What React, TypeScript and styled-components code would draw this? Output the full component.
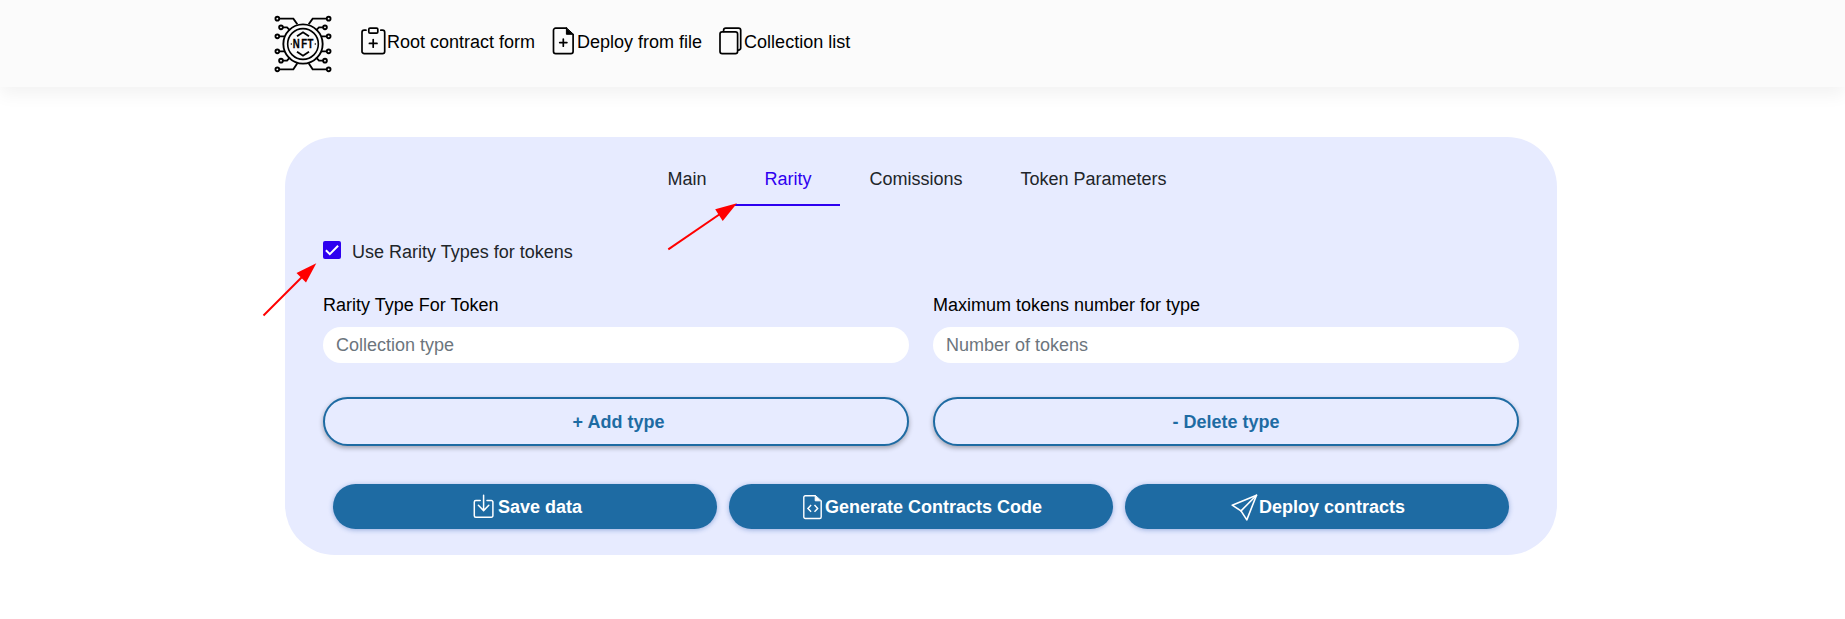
import React from "react";
import styled, { createGlobalStyle } from "styled-components";

const GlobalStyle = createGlobalStyle`
  *, *::before, *::after { box-sizing: border-box; }
  body {
    margin: 0;
    background: #fff;
    color: #212529;
    font: 18px/27px "Liberation Sans", Arial, sans-serif;
  }
`;

const Page = styled.div`
  position: relative;
  min-height: 619px;
  overflow: hidden;
`;

const Header = styled.header`
  display: flex;
  align-items: flex-start;
  height: 87px;
  padding: 15px 0 0 274px;
  background: #fbfbfb;
  box-shadow: 0 8px 16px rgba(0, 0, 0, 0.05);
`;

const Logo = styled.svg`
  display: block;
  width: 58px;
  height: 58px;
  flex: none;
`;

const Nav = styled.nav`
  display: flex;
  gap: 17px;
  margin: 12px 0 0 29px;
`;

const NavLink = styled.a`
  display: flex;
  align-items: flex-start;
  height: 28px;
  color: #000;
  white-space: nowrap;
  text-decoration: none;

  span {
    margin-top: 2px;
  }
`;

const Icon = styled.svg<{ $w: number; $h: number; $gap?: number }>`
  display: block;
  flex: none;
  width: ${(p) => p.$w}px;
  height: ${(p) => p.$h}px;
  margin-right: ${(p) => p.$gap ?? 0}px;
  fill: none;
  stroke: currentColor;
  stroke-linecap: round;
  stroke-linejoin: round;
`;

const Panel = styled.main`
  width: 1272px;
  height: 418px;
  margin: 50px 0 0 285px;
  padding: 16px 38px 0;
  border-radius: 50px;
  background: #e7ebff;
`;

const Tabs = styled.div`
  display: flex;
  justify-content: center;
  margin-right: 8px;
`;

const Tab = styled.button<{ $active?: boolean }>`
  padding: 13px 29px 11px;
  border: 0;
  border-bottom: 2px solid ${(p) => (p.$active ? "#2e00f0" : "transparent")};
  background: none;
  color: ${(p) => (p.$active ? "#2e00f0" : "#212529")};
  font: inherit;
`;

const CheckRow = styled.label`
  display: flex;
  align-items: flex-start;
  gap: 11px;
  margin-top: 33px;
  height: 27px;
`;

const CheckBox = styled.span`
  display: flex;
  width: 18px;
  height: 18px;
  margin-top: 2px;
  border-radius: 2px;
  background: #2e00f0;
`;

const Fields = styled.div`
  display: grid;
  grid-template-columns: 1fr 1fr;
  column-gap: 24px;
  margin-top: 26px;
`;

const Field = styled.label`
  display: flex;
  flex-direction: column;
  gap: 8px;
  color: #000;
`;

const Input = styled.input`
  width: 100%;
  height: 36px;
  padding: 0 13px;
  border: 0;
  border-radius: 18px;
  background: #fff;
  font: inherit;
  outline: none;

  &::placeholder {
    color: #6c757d;
    opacity: 1;
  }
`;

const OutlineButton = styled.button<{ $indent?: number }>`
  height: 49px;
  margin-top: 34px;
  padding: 2px 0 0 ${(p) => p.$indent ?? 0}px;
  border: 2px solid #1e6ba3;
  border-radius: 25px;
  background: #e7ebff;
  box-shadow: 0 2px 5px rgba(0, 0, 0, 0.32);
  color: #1e6ba3;
  font: inherit;
  font-weight: bold;
`;

const Actions = styled.div`
  display: grid;
  grid-template-columns: repeat(3, 1fr);
  gap: 12px;
  margin: 38px 10px 0;
`;

const ActionButton = styled.button`
  display: flex;
  align-items: center;
  justify-content: center;
  height: 45px;
  padding: 0;
  border: 0;
  border-radius: 23px;
  background: #1e6ba3;
  box-shadow: 0 1px 5px rgba(30, 80, 170, 0.4);
  color: #fff;
  font: inherit;
  font-weight: bold;

  span {
    padding-top: 2px;
  }
`;

const Annotations = styled.svg`
  position: absolute;
  top: 0;
  left: 0;
  width: 1845px;
  height: 619px;
  pointer-events: none;
`;

const CircuitHalf = () => (
  <>
    <circle cx="37" cy="41" r="5.6" />
    <circle cx="48" cy="67" r="5.6" />
    <circle cx="37" cy="94" r="5.6" />
    <circle cx="37" cy="139" r="5.6" />
    <circle cx="48" cy="167" r="5.6" />
    <circle cx="37" cy="193" r="5.6" />
    <path d="M43 41H85L97 58M53 67H66L75 76M43 94H58M43 139H58M53 167H66L75 157M43 193H85L97 175" />
  </>
);

const NftLogo = () => (
  <Logo viewBox="27 30 174 174" fill="none" stroke="#000" strokeWidth="5.6">
    <CircuitHalf />
    <g transform="matrix(-1 0 0 1 228 0)">
      <CircuitHalf />
    </g>
    <circle cx="114" cy="117" r="59" />
    <circle cx="114" cy="117" r="46" strokeWidth="4.8" />
    <path d="M96 94L114 82L132 94M96 140L114 152L132 140" />
    <g fill="#000" stroke="none">
      <circle cx="79" cy="117" r="2.3" />
      <circle cx="151" cy="117" r="2.3" />
      <text
        transform="scale(0.76 1)"
        x="110 143 168"
        y="130"
        fontFamily="Liberation Sans, Arial, sans-serif"
        fontWeight="bold"
        fontSize="38"
        stroke="#000"
        strokeWidth="1"
      >
        NFT
      </text>
    </g>
  </Logo>
);

const ClipboardPlus = () => (
  <Icon $w={25} $h={28} $gap={1} viewBox="0 0 25 28" strokeWidth="1.7">
    <path d="M5 3.2H3.2A2.2 2.2 0 0 0 1 5.4V24.4A2.2 2.2 0 0 0 3.2 26.6H21.5A2.2 2.2 0 0 0 23.7 24.4V5.4A2.2 2.2 0 0 0 21.5 3.2H19.8" />
    <rect x="7.8" y="1.1" width="9" height="5" rx="1.2" />
    <path d="M12.2 12.6V20.2M8.4 16.4H16" />
  </Icon>
);

const FilePlus = () => (
  <Icon $w={23} $h={28} $gap={2} viewBox="0 0 23 28" strokeWidth="1.7">
    <path d="M14.4 1.1H3.7A2.2 2.2 0 0 0 1.5 3.3V24.4A2.2 2.2 0 0 0 3.7 26.6H18.9A2.2 2.2 0 0 0 21.1 24.4V7.5" />
    <path d="M14.4 1.1V7.3H21.1Z" fill="currentColor" strokeWidth="1" />
    <path d="M11.3 12V19.2M7.7 15.6H14.9" />
  </Icon>
);

const CopyStack = () => (
  <Icon $w={23} $h={28} $gap={2} viewBox="0 0 23 28" strokeWidth="1.7">
    <rect x="1" y="4.8" width="17.6" height="21.8" rx="2.2" />
    <path d="M4.6 4.5V3.3A2.2 2.2 0 0 1 6.8 1.1H19.5A2.2 2.2 0 0 1 21.7 3.3V20.9A2.2 2.2 0 0 1 19.5 23.1H18.8" />
  </Icon>
);

const SaveDown = () => (
  <Icon $w={26} $h={25} $gap={4} viewBox="0 0 26 25" strokeWidth="1.5">
    <path d="M12.2 6.6H7.8A1.5 1.5 0 0 0 6.3 8.1V21.7A1.5 1.5 0 0 0 7.8 23.2H23.4A1.5 1.5 0 0 0 24.9 21.7V8.1A1.5 1.5 0 0 0 23.4 6.6H19" />
    <path d="M15.6 1.2V16.6M10.4 11.3L15.6 16.6L20.8 11.3" />
  </Icon>
);

const FileCode = () => (
  <Icon $w={23} $h={26} $gap={2} viewBox="0 0 23 26" strokeWidth="1.4">
    <path d="M15 1.7H5.3A1.5 1.5 0 0 0 3.8 3.2V23A1.5 1.5 0 0 0 5.3 24.5H19.7A1.5 1.5 0 0 0 21.2 23V7.2" />
    <path d="M15.2 1.7V6.8H21Z" fill="currentColor" strokeWidth="1" />
    <path d="M11.1 11L7.9 14.4L11.1 17.8M14.5 11L17.7 14.4L14.5 17.8" strokeLinecap="butt" strokeLinejoin="miter" />
  </Icon>
);

const PaperPlane = () => (
  <Icon $w={29} $h={28} $gap={1} viewBox="0 0 29 28" strokeWidth="1.6">
    <path d="M27.5 2.2L3.2 12.2L12 17.9L17.8 26.9Z" />
    <path d="M27.5 2.2L12 17.9" />
  </Icon>
);

const tabs = ["Main", "Rarity", "Comissions", "Token Parameters"];

export default function App() {
  return (
    <Page>
      <GlobalStyle />
      <Header>
        <NftLogo />
        <Nav>
          <NavLink>
            <ClipboardPlus />
            <span>Root contract form</span>
          </NavLink>
          <NavLink>
            <FilePlus />
            <span>Deploy from file</span>
          </NavLink>
          <NavLink>
            <CopyStack />
            <span>Collection list</span>
          </NavLink>
        </Nav>
      </Header>
      <Panel>
        <Tabs>
          {tabs.map((name) => (
            <Tab key={name} $active={name === "Rarity"}>
              {name}
            </Tab>
          ))}
        </Tabs>
        <CheckRow>
          <CheckBox>
            <svg width="18" height="18" viewBox="0 0 18 18" fill="none" stroke="#fff" strokeWidth="2">
              <path d="M2.9 9.2L6.8 13.1L15.1 4.7" />
            </svg>
          </CheckBox>
          Use Rarity Types for tokens
        </CheckRow>
        <Fields>
          <Field>
            Rarity Type For Token
            <Input placeholder="Collection type" />
          </Field>
          <Field>
            Maximum tokens number for type
            <Input placeholder="Number of tokens" />
          </Field>
          <OutlineButton $indent={5}>+ Add type</OutlineButton>
          <OutlineButton>- Delete type</OutlineButton>
        </Fields>
        <Actions>
          <ActionButton>
            <SaveDown />
            <span>Save data</span>
          </ActionButton>
          <ActionButton>
            <FileCode />
            <span>Generate Contracts Code</span>
          </ActionButton>
          <ActionButton>
            <PaperPlane />
            <span>Deploy contracts</span>
          </ActionButton>
        </Actions>
      </Panel>
      <Annotations viewBox="0 0 1845 619" stroke="#f00" strokeWidth="2" fill="#f00">
        <path d="M263.5 315.5L302 277" />
        <path d="M316.3 263.3L296.5 273L306 282.5Z" stroke="none" />
        <path d="M668.3 249.3L720 214" />
        <path d="M737 203.3L715.2 209.3L722.7 221Z" stroke="none" />
      </Annotations>
    </Page>
  );
}
